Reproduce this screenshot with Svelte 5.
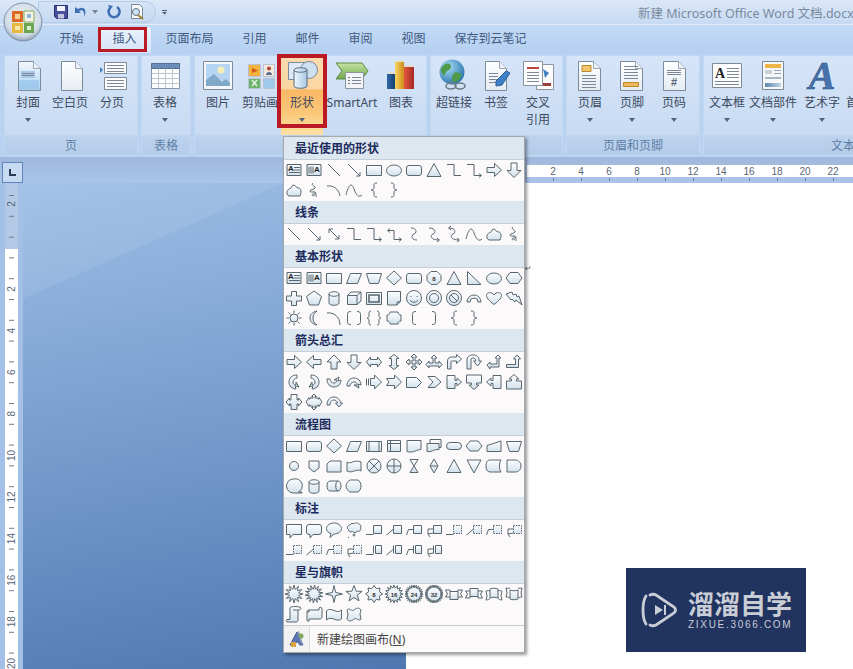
<script>
  const tabs = ['开始', '插入', '页面布局', '引用', '邮件', '审阅', '视图', '保存到云笔记'];

  const groups = [
    { label: '页', width: 134, buttons: [
      { icon: 'cover', text: '封面', w: 42, arrow: true },
      { icon: 'blank', text: '空白页', w: 42 },
      { icon: 'break', text: '分页', w: 42 }
    ] },
    { label: '表格', width: 50, buttons: [{ icon: 'table', text: '表格', w: 42, arrow: true }] },
    { label: '', width: 233, buttons: [
      { icon: 'picture', text: '图片', w: 42 },
      { icon: 'clip', text: '剪贴画', w: 42 },
      { icon: 'shapes', text: '形状', w: 42, arrow: true, hot: true },
      { icon: 'smart', text: 'SmartArt', w: 58 },
      { icon: 'chart', text: '图表', w: 40 }
    ] },
    { label: '', width: 133, buttons: [
      { icon: 'link', text: '超链接', w: 42 },
      { icon: 'mark', text: '书签', w: 42 },
      { icon: 'cross', text: '交叉', text2: '引用', w: 42 }
    ] },
    { label: '页眉和页脚', width: 134, buttons: [
      { icon: 'header', text: '页眉', w: 42, arrow: true },
      { icon: 'footer', text: '页脚', w: 42, arrow: true },
      { icon: 'pageno', text: '页码', w: 42, arrow: true }
    ] },
    { label: '文本', width: 280, buttons: [
      { icon: 'textbox', text: '文本框', w: 42, arrow: true },
      { icon: 'parts', text: '文档部件', w: 50, arrow: true },
      { icon: 'art', text: '艺术字', w: 48, arrow: true },
      { icon: 'none', text: '首字下沉', w: 48 }
    ] }
  ];

  function star(n, r1, r2, rot = -Math.PI / 2) {
    let d = '';
    for (let i = 0; i < n * 2; i++) {
      const r = i % 2 ? r2 : r1;
      const a = rot + (i * Math.PI) / n;
      d += (i ? 'L' : 'M') + (10 + r * Math.cos(a)).toFixed(1) + ' ' + (10 + r * Math.sin(a)).toFixed(1);
    }
    return d + 'z';
  }

  const rectD = 'M2.5 5.5h15v10h-15z';
  const roundD = 'M5 5.5h10a2.5 2.5 0 0 1 2.5 2.5v5a2.5 2.5 0 0 1-2.5 2.5H5a2.5 2.5 0 0 1-2.5-2.5V8A2.5 2.5 0 0 1 5 5.5z';
  const ovalD = 'M2.5 10.5a7.5 5.5 0 1 0 15 0a7.5 5.5 0 1 0-15 0z';
  const circle = (r, y = 10) => `M${10 - r} ${y}a${r} ${r} 0 1 0 ${2 * r} 0a${r} ${r} 0 1 0-${2 * r} 0z`;
  const elbow = 'M3 4.5h7v11h7';
  const lbrace = 'M13 3c-3 0-3 1-3 3v2c0 1-1 2-3 2c2 0 3 1 3 2v2c0 2 0 3 3 3';
  const rbrace = 'M7 3c3 0 3 1 3 3v2c0 1 1 2 3 2c-2 0-3 1-3 2v2c0 2 0 3-3 3';
  const sCurve = 'M7 4c6 0 6 5 3 6s-3 6 3 6';

  const S = {
    tbox: { f: 'M3 4.5h14v11H3z', l: 'M10 7.5h6M10 10h6M5 12.5h11', t: 'A', tx: 6.8, ty: 10.5 },
    vbox: { f: 'M3 4.5h14v11H3z', l: 'M5 6.5v7M7 6.5v7M9 6.5v7', t: 'A', tx: 13, ty: 12 },
    line: { l: 'M4 4L16 16' },
    arrow: { l: 'M4 4L16 16M16 12v4h-4' },
    dbl: { l: 'M5 5L15 15M15 11v4h-4M5 9V5h4' },
    rect: { f: rectD },
    oval: { f: ovalD },
    round: { f: roundD },
    tri: { f: 'M10 3.5L17 16.5H3z' },
    elbow: { l: elbow },
    elbowA: { l: elbow + 'M15 13.5l2.5 2-2.5 2' },
    elbowD: { l: 'M4 6.5h6v9h7M15 13.5l2.5 2-2.5 2M6 4.5l-2.5 2 2.5 2' },
    right: { f: 'M3 7.5h7.5v-4l7 6.5-7 6.5v-4H3z' },
    left: { f: 'M17 7.5H9.5v-4L2.5 10l7 6.5v-4H17z' },
    up: { f: 'M7 17V10H3l7-7 7 7h-4v7z' },
    down: { f: 'M7 3h6v7.5h4l-7 7-7-7h4z' },
    free: { f: 'M3.5 15c-1.5-3 0-6 3-6.5L9 5c3 0 3 3 5.5 3c3 0 3 5 1.5 8H5z' },
    scrib: { l: 'M9 3c-3 2 3 3 2 5s-5 1-5 3 6 0 6 2-3 3-3 3-2-1 0-2 4 1 3 3' },
    curve: { l: 'M3 6c6-1 12 3 13 10' },
    wave: { l: 'M2 15C5 3 8 3 10 9s5 9 8 6' },
    lbrace: { l: lbrace },
    rbrace: { l: rbrace },
    sc: { l: sCurve },
    scA: { l: 'M5 4c7 0 7 5 4 6s-3 6 6 6M13 14l2.5 2-2.5 2' },
    scD: { l: 'M5 4c7 0 7 5 4 6s-3 6 6 6M13 14l2.5 2-2.5 2M7 2l-2.5 2 2.5 2' },
    para: { f: 'M6.5 5.5h11l-4 10h-11z' },
    trap: { f: 'M2.5 5.5h15l-3 10h-9z' },
    dia: { f: 'M10 3l7.5 7-7.5 7-7.5-7z' },
    oct: { f: 'M7 3.5h6l4 4v5l-4 4H7l-4-4v-5z', t: '8', tx: 10, ty: 12.5 },
    rtri: { f: 'M3.5 3.5L17 16.5H3.5z' },
    hex: { f: 'M6 4.5h8l4 5.5-4 5.5H6L2 10z' },
    plus: { f: 'M7.5 3.5h5V8h5v5h-5v4.5h-5V13h-5V8h5z' },
    pent: { f: 'M10 3l7.5 5.5-3 8.5h-9l-3-8.5z' },
    can: { f: 'M5 6c0-3 10-3 10 0v9c0 3-10 3-10 0z', l: 'M5 6c0 3 10 3 10 0' },
    cube: { f: 'M3.5 7.5L7 4h10v9l-4 3.5H3.5z', l: 'M3.5 7.5H13v9M13 7.5L17 4' },
    bevel: { f: 'M2.5 4.5h15v12h-15z', l: 'M5 7h10v7H5z', b: true },
    fold: { f: 'M3.5 3.5h13v10L13 17H3.5z', l: 'M16.5 13.5l-3.5.5V17' },
    smile: { f: circle(7.5), l: 'M7 8v1M13 8v1M6 12c2 3 6 3 8 0' },
    donut: { f: circle(7.5), l: circle(4.5) },
    noSym: { f: circle(7.5), l: circle(4.5) + 'M7 7l6 6' },
    barc: { f: 'M3 14a7 7 0 0 1 14 0h-3a4 4 0 0 0-8 0z' },
    heart: { f: 'M10 16.5C4 12 2.5 9.5 2.5 7.5 2.5 4 8 3.5 10 7c2-3.5 7.5-3 7.5.5 0 2-1.5 4.5-7.5 9z' },
    bolt: { f: 'M2 6l6-2 1 3 3-1 1 3 2-1 3 9-6-5-1 2-3-3-1 1z' },
    sun: { f: circle(4), l: 'M10 2.5V5M10 15v2.5M2.5 10H5M15 10h2.5M4.5 4.5l2 2M13.5 13.5l2 2M15.5 4.5l-2 2M6.500 13.500l-2 2' },
    moon: { f: 'M13 3c-5 1-7 4-7 7s2 6 7 7c-3-2-4-4-4-7s1-5 4-7z' },
    arc: { l: 'M3 5c7-1 13 4 13 12' },
    bpair: { l: 'M7 3.5c-3 0-3.5 1-3.5 3v7c0 2 .5 3 3.5 3M13 3.5c3 0 3.5 1 3.5 3v7c0 2-.5 3-3.5 3' },
    cpair: { l: 'M7 3c-2 0-2 1-2 3v2c0 1-1 2-2 2 1 0 2 1 2 2v2c0 2 0 3 2 3M13 3c2 0 2 1 2 3v2c0 1 1 2 2 2-1 0-2 1-2 2v2c0 2 0 3-2 3' },
    plaque: { f: 'M6 4h8c0 2 1 3 3 3v6c-2 0-3 1-3 3H6c0-2-1-3-3-3V7c2 0 3-1 3-3z' },
    lbrk: { l: 'M12 3.5c-3 0-3.5 1-3.5 3v7c0 2 .5 3 3.5 3' },
    rbrk: { l: 'M8 3.5c3 0 3.5 1 3.5 3v7c0 2-.5 3-3.5 3' },
    lr: { f: 'M2.5 10l4-5v2.5h7V5l4 5-4 5v-2.5h-7V15z' },
    ud: { f: 'M10 2.5l5 4h-2.5v7H15l-5 4-5-4h2.5v-7H5z' },
    quad: { f: 'M10 2l3 3h-2v4h4V7l3 3-3 3v-2h-4v4h2l-3 3-3-3h2v-4H5v2l-3-3 3-3v2h4V5H7z' },
    lru: { f: 'M10 3l3 3h-2v5h4V9l3 3.5-3 3.5v-2H5v2l-3-3.5L5 9v2h4V6H7z' },
    bent: { f: 'M3.5 17V9c0-3 2-4 5-4h4V2.5l5 4.5-5 4.5V9h-4C7.5 9 7 9 7 10v7z' },
    uturn: { f: 'M3 17V8c0-3 2-5 6-5s6 2 6 5v1h2.5l-4 5-4-5h2V8c0-1.5-1-2-2.5-2S7 6.5 7 8v9z' },
    leftUp: { f: 'M3 13l3-3v2h7V6h-2l3-3 3 3h-2v9H6v2z' },
    bentUp: { f: 'M2.5 12.5h9V7h-2L13 3l3.5 4h-2v8.5h-12z' },
    cRight: { f: 'M13 3C8 3 5 6 5 10s3 7 7 7l-1-3 4 1-3-5v3c-2 0-3-1-3-3s2-4 4-4z' },
    cLeft: { f: 'M7 3c5 0 8 3 8 7s-3 7-7 7l1-3-4 1 3-5v3c2 0 3-1 3-3S9 6 7 6z' },
    cUp: { f: 'M3 7c0 5 3 8 7 8s7-3 7-7l-3 1 1-4-5 3h3c0 2-1 3-3 3S6 9 6 7z' },
    cDown: { f: 'M3 14c0-5 3-8 7-8s7 3 7 7l-3-1 1 4-5-3h3c0-2-1-3-3-3s-4 2-4 4z' },
    strip: { f: 'M6.5 6.5h4V3l7 7-7 7v-3.5h-4z', l: 'M2.5 6.5v7M4.5 6.5v7' },
    notch: { f: 'M2.5 6.5h8V3l7 7-7 7v-3.5h-8L5 10z' },
    home: { f: 'M2.5 5.5h10l5 5-5 5h-10z' },
    chev: { f: 'M4 4.5h7l6 5.5-6 5.5H4l5-5.5z' },
    rCall: { f: 'M3 3.5h8v5h2V6l4.5 4-4.5 4v-2.5h-2v5H3z' },
    dCall: { f: 'M2.5 3h15v8h-5v2H15l-5 4.5L5 13h2.5v-2h-5z' },
    lCall: { f: 'M17 3.5H9v5H7V6l-4.5 4L7 14v-2.5h2v5h8z' },
    uCall: { f: 'M2.5 17h15V9h-5V7H15l-5-4.5L5 7h2.5v2h-5z' },
    lrCall: { f: 'M7 2.5h6V8h1.5V6l3.5 4-3.5 4v-2H13v5.5H7V12H5.5v2L2 10l3.5-4v2H7z' },
    qCall: { f: 'M10 2l2.5 2.5H11V6h3v1h1V5.500L18 10l-3 4.500V13h-1v1h-3v1.500h1.500L10 18l-2.500-2.500H9V14H6v-1H5v1.500L2 10l3-4.500V7h1V6h3V4.500H7.500z' },
    circ: { f: 'M3 13c0-6 4-8 7-8s6 2 6.5 6h2L15 15l-3.500-4h2c-.5-2-2-3-3.500-3-2 0-4 1-4 5z' },
    fPre: { f: rectD, l: 'M5 5.5v10M15 5.5v10' },
    fInt: { f: 'M3.5 4.5h13v11h-13z', l: 'M3.5 7.5h13M6.500 4.500v11' },
    fDoc: { f: 'M3 4.5h14v9c-5 0-7 4-14 2z' },
    fMulti: { f: 'M6 3.5h11v8h-2v2h-2c-4 0-5 3-10 2V7.500h3z', l: 'M5 7.5h10v4' },
    term: { f: 'M6 6.5h8a3.5 3.5 0 0 1 0 7H6a3.5 3.5 0 0 1 0-7z' },
    prep: { f: 'M6 5h8l4 5-4 5H6l-4-5z' },
    mInput: { f: 'M3 9.5l14-4.5v10.5H3z' },
    conn: { f: circle(4.5) },
    offp: { f: 'M5 5h10v7l-5 4-5-4z' },
    card: { f: 'M6 5h11v11H3V8z' },
    tape: { f: 'M3 6c3 3 7-3 14 0v9c-4-3-9 3-14 0z' },
    sum: { f: circle(7), l: 'M5 5l10 10M15 5L5 15' },
    or: { f: circle(7), l: 'M3 10h14M10 3v14' },
    coll: { f: 'M6 3.5h8L6 16.5h8z' },
    sort: { f: 'M10 3l4 7-4 7-4-7z', l: 'M6 10h8' },
    merge: { f: 'M3 4h14l-7 13z' },
    stored: { f: 'M6 4h11c-2 2-2 10 0 12H6c-3 0-4-3-4-6s1-6 4-6z' },
    delay: { f: 'M3 4h8c4 0 6 3 6 6s-2 6-6 6H3z' },
    seq: { f: 'M9.5 3a7 7 0 1 0 0 14H18v-1h-3.500A7 7 0 0 0 9.500 3z' },
    drum: { f: 'M6 5h8c4 0 4 10 0 10H6c-4 0-4-10 0-10z', l: 'M14 5c-3 0-3 10 0 10' },
    disp: { f: 'M6 4h8c2 1 3 4 3 6s-1 5-3 6H6c-2-1-4-4-4-6s2-5 4-6z' },
    cRect: { f: 'M2.5 4.5h15v10H9l-3 3.5v-3.5H2.5z' },
    cRound: { f: 'M5 4.5h10A2.5 2.5 0 0 1 17.5 7v5a2.5 2.5 0 0 1-2.5 2.5H9l-3 3.5v-3.5H5A2.5 2.5 0 0 1 2.5 12V7A2.5 2.5 0 0 1 5 4.5z' },
    cOval: { f: 'M10 3c4 0 7.5 2.5 7.5 5.5S14 14 10 14l-4 3.5 1-4C4 12.5 2.5 11 2.5 8.5 2.5 5.5 6 3 10 3z' },
    cCloud: { f: 'M6 5c1-2 3-2 4-1 2-2 4-1 4.5 0 2 0 3 2 2 4 1 2-1 4-3 3-1 2-4 2-5 .5-2 1-4 0-4-2-2-1-1-4 1-4.5z', l: circle(1, 15) + 'M4 17.5h1' },
    lc1: { f: 'M9.5 5.5h8v8h-8z', l: 'M2 14.5h7.5' },
    lc2: { f: 'M9.5 5.5h8v8h-8z', l: 'M2.5 15L9.5 9' },
    lc3: { f: 'M9.5 5.5h8v8h-8z', l: 'M2.5 15l2-5.5h5' },
    lc4: { f: 'M9.5 5.5h8v8h-8z', l: 'M9.5 13L4 14V9h5.5M4 14l2 3' },
    dc1: { f: 'M9.5 5.5h8v8h-8z', l: 'M2 14.5h7.5', dash: true },
    dc2: { f: 'M9.5 5.5h8v8h-8z', l: 'M2.5 15L9.5 9', dash: true },
    dc3: { f: 'M9.5 5.5h8v8h-8z', l: 'M2.5 15l2-5.5h5', dash: true },
    dc4: { f: 'M9.5 5.5h8v8h-8z', l: 'M9.5 13L4 14V9h5.5M4 14l2 3', dash: true },
    bc1: { f: 'M11.5 5.5h6v8h-6z', l: 'M9.5 5.5v8M2 14.5h7.5' },
    bc2: { f: 'M11.5 5.5h6v8h-6z', l: 'M9.5 5.5v8M2.5 15l7-6' },
    bc3: { f: 'M11.5 5.5h6v8h-6z', l: 'M9.5 5.5v8M2.5 15l2-5.5h5' },
    bc4: { f: 'M11.5 5.5h6v8h-6z', l: 'M9.5 5.5v8M9.5 13L4 14V9h5.5M4 14l2 3' },
    burst1: { f: star(12, 9, 4.8) },
    burst2: { f: star(14, 9, 4.8, 0.3) },
    st4: { f: star(4, 8.5, 2.2) },
    st5: { f: star(5, 8.5, 3.5) },
    st8: { f: star(8, 8.5, 5.8), t: '8', tx: 10, ty: 12.5 },
    st16: { f: star(16, 9, 6), t: '16', tx: 10, ty: 12.5 },
    st24: { f: star(24, 9, 6.3), t: '24', tx: 10, ty: 12.5 },
    st32: { f: star(32, 9, 6.5), t: '32', tx: 10, ty: 12.5 },
    ribU: { f: 'M6 7.5h8v8H6z', l: 'M6 13H1.5l2-3-2-4H6v1.5M14 13h4.5l-2-3 2-4H14v1.5' },
    ribD: { f: 'M6 4.5h8v8H6z', l: 'M6 7H1.5l2 3-2 4H6v-1.5M14 7h4.5l-2 3 2 4H14v-1.5' },
    crU: { f: 'M6 5c2-1 6-1 8 0v9c-2-1-6-1-8 0z', l: 'M6 7C4 6 3 7 2 7l1 5-1 4c2 0 4-1 4-2M14 7c2-1 3 0 4 0l-1 5 1 4c-2 0-4-1-4-2' },
    crD: { f: 'M6 6c2 1 6 1 8 0v9c-2 1-6 1-8 0z', l: 'M6 4C4 5 3 4 2 4l1 5-1 4c2 0 4 1 4 0M14 4c2 1 3 0 4 0l-1 5 1 4c-2 0-4 1-4 0' },
    vscr: { f: 'M6 4c0-2 10-2 11 0 0 1-1 2-3 2v10c0 1.5-1 2-2 2H3c-1-1-1-2 0-2.500h3z', l: 'M14 6H9' },
    hscr: { f: 'M3 8c0-1.5 1-2 2-2h10V4c1-1 3-1 3 1v8c0 1-1 2-2 2H5v2c-1 1-2 0-2-1z', l: 'M5 6v2H3' },
    wav: { f: 'M2.5 7c5-5 10 4 15-1v9c-5 4-10-4-15 1z' },
    dwav: { f: 'M3 6c2-3 5 2 7 0s5-3 7 0l-1 4 1 5c-2 3-5-2-7 0s-5 3-7 0l1-5z' }
  };

  const sections = [
    { title: '最近使用的形状', items: 'tbox vbox line arrow rect oval round tri elbow elbowA right down free scrib curve wave lbrace rbrace' },
    { title: '线条', items: 'line arrow dbl elbow elbowA elbowD sc scA scD wave free scrib' },
    { title: '基本形状', items: 'tbox vbox rect para trap dia round oct tri rtri oval hex plus pent can cube bevel fold smile donut noSym barc heart bolt sun moon arc bpair cpair plaque lbrk rbrk lbrace rbrace' },
    { title: '箭头总汇', items: 'right left up down lr ud quad lru bent uturn leftUp bentUp cRight cLeft cUp cDown strip notch home chev rCall dCall lCall uCall lrCall qCall circ' },
    { title: '流程图', items: 'rect round dia para fPre fInt fDoc fMulti term prep mInput trap conn offp card tape sum or coll sort tri merge stored delay seq can drum disp' },
    { title: '标注', items: 'cRect cRound cOval cCloud lc1 lc2 lc3 lc4 dc1 dc2 dc3 dc4 dc1 dc2 dc3 dc4 bc1 bc2 bc3 bc4' },
    { title: '星与旗帜', items: 'burst1 burst2 st4 st5 st8 st16 st24 st32 ribU ribD crU crD vscr hscr wav dwav' }
  ].map((s) => ({ ...s, shapes: s.items.split(' ') }));

  const hNums = [2, 4, 6, 8, 10, 12, 14, 16, 18, 20, 22];
  const vNums = [2, 4, 6, 8, 10, 12, 14, 16, 18, 20];
  const vTicks = Array.from({ length: 23 }, (_, i) => i);
</script>

{#snippet sheet(x, y, w, h, fill = 'url(#pg)')}
  <path d="M{x + .5} {y + .5}h{w - 7}l7 7v{h - 7}h-{w}z" fill={fill} stroke="#7d8a99" />
  <path d="M{x + w - 6.5} {y + .5}v7h7" fill="#eef3f9" stroke="#9aa7b5" />
{/snippet}

{#snippet rlines(x, y, w, n, gap = 3)}
  {#each Array(n) as _, i}
    <path d="M{x} {y + i * gap + .5}h{w}" stroke="#7c8896" />
  {/each}
{/snippet}

{#snippet ricon(key)}
  <svg class="ricon" viewBox="0 0 34 32" width="34" height="32">
    {#if key === 'cover'}
      {@render sheet(7, 2, 22, 29, 'url(#cv)')}
      <path d="M10 12h14v7H10z" fill="#a9c8e6" />
      {@render rlines(11, 14, 12, 2, 2)}
      <path d="M8 21h20v9H8z" fill="#8fc0e8" opacity=".6" />
    {:else if key === 'blank'}
      {@render sheet(8, 2, 21, 29)}
    {:else if key === 'break'}
      <path d="M5 8l3 3-3 3z" fill="#3f7fc4" />
      <path d="M9.5 3.500h22v11h-22zM9.500 18.500h22v12h-22z" fill="#fdfdfd" stroke="#7d8a99" />
      {@render rlines(12, 6, 17, 3, 3)}
      {@render rlines(12, 21, 17, 3, 3)}
    {:else if key === 'table'}
      <path d="M3.5 4.5h28v25h-28z" fill="#fdfdfd" stroke="#8493a5" />
      <path d="M3.5 4.5h28v5h-28z" fill="#6c8db8" stroke="#556f93" />
      <path d="M3.5 14.5h28M3.5 19.5h28M3.5 24.5h28M10.5 9.5v20M17.5 9.5v20M24.5 9.5v20" stroke="#b9c4d1" fill="none" />
    {:else if key === 'picture'}
      <path d="M2.5 2.5h29v28h-29z" fill="#f4f6f9" stroke="#7f8a97" />
      <path d="M5 5h24v22H5z" fill="#b5d5f3" />
      <circle cx="20" cy="11" r="3.5" fill="#f6ecb8" />
      <path d="M5 27v-6l8-6 8 8 4-3 4 4v3z" fill="#7fa8c9" />
    {:else if key === 'clip'}
      <path d="M5.5 5.5h12v12h-12z" fill="#f2b33c" stroke="#b9c2cd" />
      <path d="M9 9l6 2.5-6 2.5z" fill="#d2581e" />
      <path d="M20.5 5.5h11v12h-11z" fill="#f1e9de" stroke="#b9c2cd" />
      <circle cx="26" cy="9.5" r="2" fill="#b2442d" /><path d="M23 16c0-4 6-4 6 0z" fill="#5b6a8a" />
      <path d="M5.5 19.5h12v10h-12z" fill="#6cb46e" stroke="#b9c2cd" />
      <path d="M9 21l5 6M14 21l-5 6" stroke="#e6f2e3" stroke-width="1.5" />
      <path d="M20.5 19.5h11v10h-11z" fill="#9ec8ec" stroke="#b9c2cd" />
    {:else if key === 'shapes'}
      <path d="M3.5 3.5h17v17h-17z" fill="#dfe9f5" stroke="#7d8a99" />
      <circle cx="24" cy="11" r="8.5" fill="#cfe0f1" stroke="#7d8a99" />
      <path d="M9 11c0-3 13-3 13 0v16c0 3-13 3-13 0z" fill="url(#can)" stroke="#566a80" />
      <path d="M9 11c0 3 13 3 13 0" fill="none" stroke="#566a80" />
    {:else if key === 'smart'}
      <path d="M1 4h26l6 8-6 8H1l6-8z" fill="url(#grn)" stroke="#5f8a43" />
      <path d="M10.5 13.5h18v16h-18z" fill="#f2f4f6" stroke="#8a949e" />
      {@render rlines(17, 18, 9, 3, 3)}
      <path d="M13 18h2v1h-2zM13 21h2v1h-2zM13 24h2v1h-2z" fill="#6a7684" />
    {:else if key === 'chart'}
      <path d="M3 15h8v15H3z" fill="url(#bl)" />
      <path d="M11 3h9v27h-9z" fill="url(#yl)" />
      <path d="M20 8h10v22H20z" fill="url(#rd)" />
      <path d="M3 15l2-2h7v2zM11 3l2-2h7l-2 2zM20 8l2-2h8l-2 2z" fill="#e9ddb5" opacity=".7" />
    {:else if key === 'link'}
      <circle cx="15" cy="13" r="12.5" fill="url(#globe)" />
      <path d="M7 6c4-3 7-1 7 2s-5 3-6 7-3-1-4-3 1-4 3-6zM17 14c3-1 7 0 8 2-2 5-5 7-8 7s-2-7 0-9z" fill="#4f9a48" />
      <ellipse cx="14" cy="27" rx="5" ry="3" fill="none" stroke="#6e7a84" stroke-width="1.5" />
      <ellipse cx="23" cy="27" rx="5" ry="3" fill="none" stroke="#6e7a84" stroke-width="1.5" />
    {:else if key === 'mark'}
      {@render sheet(6, 2, 21, 29)}
      {@render rlines(10, 14, 9, 4, 3)}
      <path d="M17 22l10-10 4 2-8 12-6 1z" fill="#3d82c6" stroke="#2c5f96" />
    {:else if key === 'cross'}
      <path d="M15.5 5.5h17v25h-17z" fill="#fbfbfb" stroke="#8a949e" />
      <path d="M2.5 2.5h19v24h-19z" fill="#fdfdfd" stroke="#8a949e" />
      <path d="M6 8h12v2H6z" fill="#b9463a" />
      {@render rlines(6, 13, 12, 4, 3)}
      <path d="M22 10l6 4-4 5z" fill="#3f7fc4" />
      <path d="M22 24h8v3h-8z" fill="#96403a" />
    {:else if key === 'header'}
      {@render sheet(5, 2, 22, 29)}
      <path d="M9 6.5h9v6H9z" fill="#f3c66d" stroke="#b98a2a" />
      {@render rlines(9, 16, 14, 5, 3)}
    {:else if key === 'footer'}
      {@render sheet(5, 2, 22, 29)}
      {@render rlines(9, 7, 14, 5, 3)}
      <path d="M8.5 23.5h15v4h-15z" fill="#f0b95e" stroke="#b98a2a" />
    {:else if key === 'pageno'}
      {@render sheet(6, 2, 22, 29)}
      {@render rlines(10, 11, 14, 3, 2)}
      <text class="hash" x="17" y="27">#</text>
    {:else if key === 'textbox'}
      <path d="M2.5 4.5h29v24h-29z" fill="#fdfdfd" stroke="#7d8a99" />
      <text class="ta" x="5" y="19">A</text>
      {@render rlines(17, 9, 12, 4, 3)}
      {@render rlines(5, 22, 24, 2, 3)}
    {:else if key === 'parts'}
      <path d="M6.5 2.5h21v28h-21z" fill="#f6f7f9" stroke="#7d8a99" />
      <path d="M9 5h16v4H9z" fill="#f0b548" />
      <path d="M9 11h7v4H9z" fill="#c7d0da" /><path d="M18 11h7v1h-7zM18 14h7v1h-7z" fill="#98a5b5" />
      <path d="M9 18h16v2H9z" fill="#a7b6c6" /><path d="M9 24h16v4H9z" fill="url(#pbar)" />
    {:else if key === 'art'}
      <text class="wa" x="17" y="30">A</text>
    {/if}
  </svg>
{/snippet}

<svg class="defs" width="0" height="0" aria-hidden="true">
  <defs>
    <linearGradient id="sg" x1="0" y1="0" x2="0" y2="1"><stop offset="0" stop-color="#fdfeff" /><stop offset="1" stop-color="#d3e1ec" /></linearGradient>
    <linearGradient id="pg" x1="0" y1="0" x2="0" y2="1"><stop offset="0" stop-color="#ffffff" /><stop offset="1" stop-color="#e6ecf4" /></linearGradient>
    <linearGradient id="cv" x1="0" y1="0" x2="0" y2="1"><stop offset="0" stop-color="#f3f8fd" /><stop offset="1" stop-color="#a9d2f2" /></linearGradient>
    <linearGradient id="can" x1="0" y1="0" x2="1" y2="0"><stop offset="0" stop-color="#eef5fb" /><stop offset="1" stop-color="#a8c9e8" /></linearGradient>
    <linearGradient id="grn" x1="0" y1="0" x2="0" y2="1"><stop offset="0" stop-color="#c7e3a5" /><stop offset="1" stop-color="#6fa84a" /></linearGradient>
    <linearGradient id="bl" x1="0" y1="0" x2="1" y2="0"><stop offset="0" stop-color="#2f67a8" /><stop offset="1" stop-color="#16406f" /></linearGradient>
    <linearGradient id="yl" x1="0" y1="0" x2="1" y2="0"><stop offset="0" stop-color="#f7d65e" /><stop offset="1" stop-color="#cf8a1c" /></linearGradient>
    <linearGradient id="rd" x1="0" y1="0" x2="1" y2="0"><stop offset="0" stop-color="#e2573f" /><stop offset="1" stop-color="#a52a22" /></linearGradient>
    <radialGradient id="globe" cx=".35" cy=".3" r=".8"><stop offset="0" stop-color="#a9dcf3" /><stop offset="1" stop-color="#1c6aa8" /></radialGradient>
    <linearGradient id="pbar" x1="0" y1="0" x2="1" y2="0"><stop offset="0" stop-color="#5c87ae" /><stop offset="1" stop-color="#c3d6e6" /></linearGradient>
    <radialGradient id="orb" cx=".5" cy=".4" r=".62"><stop offset="0" stop-color="#e9eef3" /><stop offset=".72" stop-color="#d3dde8" /><stop offset=".88" stop-color="#aebccb" /><stop offset="1" stop-color="#74889f" /></radialGradient>
  </defs>
</svg>

<div class="app">
  <header class="titlebar">
    <div class="orb">
      <svg viewBox="0 0 40 40" width="40" height="40">
        <circle cx="20" cy="20" r="19" fill="url(#orb)" stroke="#7f93aa" />
        <path d="M9 9h11v11H9z" fill="#dd6a24" />
        <path d="M12 12h5v5h-5z" fill="#f6cf9a" />
        <path d="M21 9h10v11H21z" fill="#f5f3e8" stroke="#86ad5c" />
        <path d="M24 12h4v4h-4z" fill="#8fb4d8" />
        <path d="M9 21h11v10H9z" fill="#e7b93f" />
        <path d="M12 24h5v4h-5z" fill="#f7e8ac" />
        <path d="M21 21h10v10H21z" fill="#69a64f" />
        <path d="M24 24h4v4h-4z" fill="#dceccf" />
      </svg>
    </div>
    <div class="qat">
      <svg viewBox="0 0 16 16" width="16" height="16">
        <path d="M1.5 1.5h13v13h-11l-2-2z" fill="#4a4f9c" stroke="#2c3070" />
        <path d="M4 2h8v5H4z" fill="#f4f5fa" />
        <path d="M5 10h6v4.5H5z" fill="#c4c7de" />
      </svg>
      <svg class="undo" viewBox="0 0 16 16" width="16" height="16">
        <path d="M2 3v6h6L6 7c3-2 6 0 5 6 3-5 1-10-3-9-1 0-2 .5-3 1z" fill="#3d6fb2" />
      </svg>
      <span class="caret small"></span>
      <svg class="redo" viewBox="0 0 16 16" width="16" height="16">
        <path d="M11 3a5.500 5.500 0 1 1-7 1" fill="none" stroke="#3d6fb2" stroke-width="2.5" />
        <path d="M2 1l5 1-3 4z" fill="#3d6fb2" />
      </svg>
      <svg class="preview" viewBox="0 0 18 18" width="18" height="18">
        <path d="M3.5 1.5h8l3 3v11h-11z" fill="#fafbfc" stroke="#7c8896" />
        <circle cx="8" cy="9" r="3.5" fill="#cfe3f4" stroke="#5d6b78" />
        <path d="M10 12l5 4" stroke="#a98233" stroke-width="2" />
      </svg>
    </div>
    <span class="qat-more"></span>
    <span class="doc-title">新建 Microsoft Office Word 文档.docx</span>
  </header>

  <nav class="tabs">
    {#each tabs as tab, i}
      <span class="tab" class:active={i === 1}>{tab}</span>
    {/each}
  </nav>

  <div class="ribbon">
    {#each groups as group}
      <section class="group" style="flex-basis: {group.width}px">
        <div class="group-body">
          {#each group.buttons as btn}
            <div class="rbtn" class:hot={btn.hot} style="width: {btn.w}px">
              {@render ricon(btn.icon)}
              <span class="rlabel">{btn.text}</span>
              {#if btn.text2}<span class="rlabel">{btn.text2}</span>{/if}
              {#if btn.arrow}<span class="caret"></span>{/if}
            </div>
          {/each}
        </div>
        <div class="group-label">{group.label}</div>
      </section>
    {/each}
  </div>

  <main class="work">
    <div class="ruler-row">
      <div class="corner"><span class="corner-mark"></span></div>
      <svg class="hruler" width="447" height="18" viewBox="0 0 447 18">
        <rect x="0" y="0" width="121" height="12" fill="#a9c1e2" />
        <rect x="121" y="0" width="326" height="12" fill="#ffffff" />
        {#each hNums as n, i}
          <text x={147 + i * 28} y="10">{n}</text>
          <path d="M{147.5 + i * 28} 13v3" stroke="#6f85a3" />
        {/each}
      </svg>
    </div>
    <div class="doc-row">
      <div class="vruler-col">
        <svg class="vruler" width="13" height="486" viewBox="0 0 13 486">
          <rect width="13" height="66" fill="#b3c9e5" />
          <rect y="66" width="13" height="420" fill="#ffffff" />
          {#each vTicks as i}
            <path d="M4 {12.5 + i * 20.8}h5" stroke="#6e7c8c" />
          {/each}
          <text transform="translate(10 21) rotate(-90)">2</text>
          {#each vNums as n, i}
            <text transform="translate(10 {106 + i * 41.6}) rotate(-90)">{n}</text>
          {/each}
        </svg>
      </div>
      <div class="canvas"></div>
      <div class="page"><span class="para-mark">↵</span></div>
    </div>
  </main>

  <span class="mark-tab"></span>
  <span class="mark-btn"></span>

  <div class="menu">
    {#each sections as sec}
      <div class="menu-head">{sec.title}</div>
      <div class="menu-grid">
        {#each sec.shapes as key}
          {@const s = S[key]}
          <svg class="shape" viewBox="0 0 20 20" width="20" height="20">
            {#if s.f}<path d={s.f} fill="url(#sg)" stroke-dasharray={s.dash ? '1.5 1' : undefined} />{/if}
            {#if s.l}<path d={s.l} fill="none" stroke-width={s.b ? 1.6 : 1} />{/if}
            {#if s.t}
              <text class="st" class:big={s.t === 'A'} x={s.tx} y={s.ty}>{s.t}</text>
            {/if}
          </svg>
        {/each}
      </div>
    {/each}
    <div class="menu-foot">
      <div class="foot-icon">
        <svg viewBox="0 0 18 18" width="18" height="18">
          <path d="M9 2L2 15h5l2-4 3 4h3z" fill="#5a78b8" stroke="#3c5488" />
          <path d="M9 2l2-1 4 14-1 1z" fill="#8c98b8" />
          <path d="M3 12h5v5H3z" fill="#d9a441" />
          <circle cx="13" cy="6" r="2.5" fill="#7fa85e" />
        </svg>
      </div>
      <span class="foot-text">新建绘图画布(<u>N</u>)</span>
    </div>
  </div>

  <aside class="watermark">
    <svg viewBox="0 0 40 40" width="40" height="40">
      <path d="M6 6c-2 3-3 8-3 14s1 11 3 14" fill="none" stroke="#c9cdd5" stroke-width="2.8" stroke-linecap="round" />
      <path d="M10 5c2-1 4-1 6 0l18 12c2 2 2 4 0 6L16 35c-2 1-4 1-6 0" fill="none" stroke="#c9cdd5" stroke-width="2.8" stroke-linecap="round" />
      <path d="M15 15l8 5-8 5z" fill="#c9cdd5" />
      <path d="M25 15v10" stroke="#c9cdd5" stroke-width="2" />
    </svg>
    <div class="wm-text">
      <strong>溜溜自学</strong>
      <span>ZIXUE.3066.COM</span>
    </div>
  </aside>
</div>

<style>
  :global(body) {
    margin: 0;
    background: #a9c5e9;
  }

  .defs {
    position: absolute;
  }

  .app {
    position: relative;
    width: 853px;
    height: 669px;
    overflow: hidden;
    display: flex;
    flex-direction: column;
    font-family: "Noto Sans", "Noto Sans CJK SC", sans-serif;
    font-size: 12px;
    color: #3c4a60;
  }

  .titlebar {
    flex: 0 0 25px;
    display: flex;
    align-items: center;
    position: relative;
    background: linear-gradient(#dbe8f7, #c6daf3);
    border-bottom: 1px solid #e3eefa;
    box-sizing: border-box;
  }

  .orb {
    position: absolute;
    left: 3px;
    top: 2px;
    z-index: 2;
  }

  .qat {
    display: flex;
    align-items: center;
    margin: 0 0 0 38px;
    height: 22px;
    width: 118px;
    padding-left: 14px;
    box-sizing: border-box;
    border: 1px solid #b4cbe6;
    border-radius: 0 12px 12px 0;
    background: linear-gradient(#d5e4f7, #c5d9f2);
  }

  .undo { margin-left: 4px; }
  .redo { margin-left: 8px; }
  .preview { margin-left: 6px; }

  .qat-more {
    width: 5px;
    height: 5px;
    margin: 0 0 0 6px;
    background: linear-gradient(#4a5a70 0 1px, transparent 1px 2px, #4a5a70 2px);
    clip-path: polygon(0 0, 100% 0, 100% 50%, 50% 100%, 0 50%);
  }

  .doc-title {
    position: absolute;
    left: 638px;
    top: 5px;
    font-size: 12.5px;
    line-height: 18px;
    color: #7a8a9d;
    white-space: nowrap;
  }

  .tabs {
    flex: 0 0 28px;
    display: flex;
    align-items: center;
    padding-left: 45px;
    background: linear-gradient(#c3daf6, #b5d0f1);
    box-sizing: border-box;
  }

  .tab {
    padding: 0 14.5px;
    height: 26px;
    margin-top: 2px;
    line-height: 24px;
    color: #40597d;
  }

  .tab.active {
    background: linear-gradient(#eaf2fc, #d3e3f7);
    border-radius: 3px 3px 0 0;
  }

  .ribbon {
    flex: 0 0 104px;
    display: flex;
    gap: 3px;
    padding: 2px 0 1px 4px;
    box-sizing: border-box;
    background: #b9d2f2;
    overflow: hidden;
  }

  .group {
    flex-shrink: 0;
    flex-grow: 0;
    display: flex;
    flex-direction: column;
    box-sizing: border-box;
    border-radius: 3px;
    outline: 1px solid #c3d7f0;
    outline-offset: -1px;
    overflow: hidden;
  }

  .group-body {
    flex: 0 0 80px;
    display: flex;
    padding: 0 3px;
    background: linear-gradient(#d6e5f8, #c8dbf3);
  }

  .group-label {
    flex: 1;
    text-align: center;
    line-height: 21px;
    color: #5f7ea6;
    background: linear-gradient(#bdd3ee, #b4cce9);
  }

  .rbtn {
    flex-shrink: 0;
    display: flex;
    flex-direction: column;
    align-items: center;
    padding-top: 4px;
    box-sizing: border-box;
    height: 80px;
    white-space: nowrap;
  }

  .rbtn.hot {
    background: linear-gradient(#fbdcb0 0, #fbd6a2 42%, #f9b866 44%, #fbc778 72%, #fde2a6 100%);
  }

  .rlabel {
    line-height: 17px;
    height: 17px;
  }

  .ricon {
    margin-bottom: 3px;
    flex-shrink: 0;
  }

  .caret {
    width: 0;
    height: 0;
    margin-top: 7px;
    border: 3px solid transparent;
    border-top: 4px solid #52627a;
    border-bottom: 0;
  }

  .caret.small {
    margin: 0 0 0 3px;
    border-top-color: #7a8796;
  }

  .hash {
    font: bold 11px "Liberation Sans", sans-serif;
    fill: #5b6775;
    text-anchor: middle;
  }

  .ta {
    font: bold 14px "Liberation Serif", serif;
    fill: #222;
  }

  .wa {
    font: italic bold 40px "Liberation Serif", serif;
    fill: #4673ab;
    stroke: #2d5288;
    stroke-width: .6px;
    text-anchor: middle;
  }

  .work {
    flex: 1;
    display: flex;
    flex-direction: column;
    min-height: 0;
    background: #a7c0e3;
  }

  .ruler-row {
    flex: 0 0 26px;
    display: flex;
    padding: 5px 0 0 2px;
    box-sizing: border-box;
    background: linear-gradient(#9fb8dc, #aac5e8);
  }

  .corner {
    flex: 0 0 21px;
    height: 21px;
    box-sizing: border-box;
    border: 1px solid #5f83bf;
    background: #c6daf2;
    display: flex;
    align-items: center;
    justify-content: center;
  }

  .corner-mark {
    width: 5px;
    height: 5px;
    border-left: 2px solid #2c3a50;
    border-bottom: 2px solid #2c3a50;
  }

  .hruler {
    margin: 3px 0 0 383px;
    flex-shrink: 0;
  }

  .hruler text {
    font: 10px "Liberation Sans", sans-serif;
    fill: #5a6676;
    text-anchor: middle;
  }

  .doc-row {
    flex: 1;
    display: flex;
    min-height: 0;
  }

  .vruler-col {
    flex: 0 0 23px;
    padding-left: 5px;
    box-sizing: border-box;
    background: #a3c0e6;
  }

  .vruler {
    display: block;
  }

  .vruler text {
    font: 10px "Liberation Sans", sans-serif;
    fill: #5a6676;
    text-anchor: middle;
  }

  .canvas {
    flex: 0 0 383px;
    background:
      linear-gradient(156deg, rgba(255, 255, 255, .08) 0 17.5%, transparent 17.8%),
      linear-gradient(170deg, #9dbde6, #7ea3d2 40%, #4f78b0);
  }

  .page {
    flex: 1;
    background: #fff;
    padding: 81px 0 0 119px;
  }

  .para-mark {
    display: block;
    font: 8px/10px "DejaVu Sans", sans-serif;
    color: #6a6a6a;
  }

  .mark-tab,
  .mark-btn {
    position: absolute;
    box-sizing: border-box;
    border: 4px solid #bb1a24;
    z-index: 3;
  }

  .mark-tab {
    left: 98px;
    top: 27px;
    width: 49px;
    height: 25px;
    border-width: 3px;
  }

  .mark-btn {
    left: 277px;
    top: 54px;
    width: 50px;
    height: 74px;
  }

  .menu {
    position: absolute;
    left: 283px;
    top: 136px;
    width: 242px;
    box-sizing: border-box;
    border: 1px solid #a5a9ad;
    background: #fbf9fa;
    box-shadow: 2px 2px 3px rgba(0, 0, 0, .4);
    z-index: 4;
  }

  .menu-head {
    height: 23px;
    box-sizing: border-box;
    padding-left: 11px;
    line-height: 24px;
    font-weight: 700;
    color: #1c2b5e;
    background: #dde7ef;
    border-bottom: 1px solid #c4ced8;
  }

  .menu-grid {
    display: grid;
    grid-template-columns: repeat(12, 20px);
    grid-auto-rows: 20px;
    padding-bottom: 1px;
  }

  .shape {
    display: block;
    stroke: #58676f;
    stroke-width: 1;
  }

  .st {
    font: bold 6px "Liberation Sans", sans-serif;
    fill: #333;
    stroke: none;
    text-anchor: middle;
  }

  .st.big {
    font-size: 8px;
    fill: #222;
  }

  .menu-foot {
    height: 27px;
    display: flex;
    align-items: center;
    border-top: 1px solid #c9cbcd;
    box-sizing: border-box;
  }

  .foot-icon {
    flex: 0 0 25px;
    height: 100%;
    display: flex;
    align-items: center;
    justify-content: center;
    border-right: 1px solid #dcdcdc;
    background: #f2f2f2;
  }

  .foot-text {
    margin-left: 7px;
    color: #444;
  }

  .watermark {
    position: absolute;
    left: 626px;
    top: 568px;
    width: 180px;
    height: 84px;
    box-sizing: border-box;
    padding-left: 14px;
    display: flex;
    align-items: center;
    gap: 8px;
    background: #21335f;
    z-index: 5;
  }

  .wm-text {
    display: flex;
    flex-direction: column;
    color: #c9cdd5;
  }

  .wm-text strong {
    font-size: 26px;
    line-height: 30px;
    font-weight: 700;
  }

  .wm-text span {
    font-size: 10px;
    line-height: 12px;
    letter-spacing: 1.7px;
    font-family: "Liberation Sans", sans-serif;
  }
</style>
